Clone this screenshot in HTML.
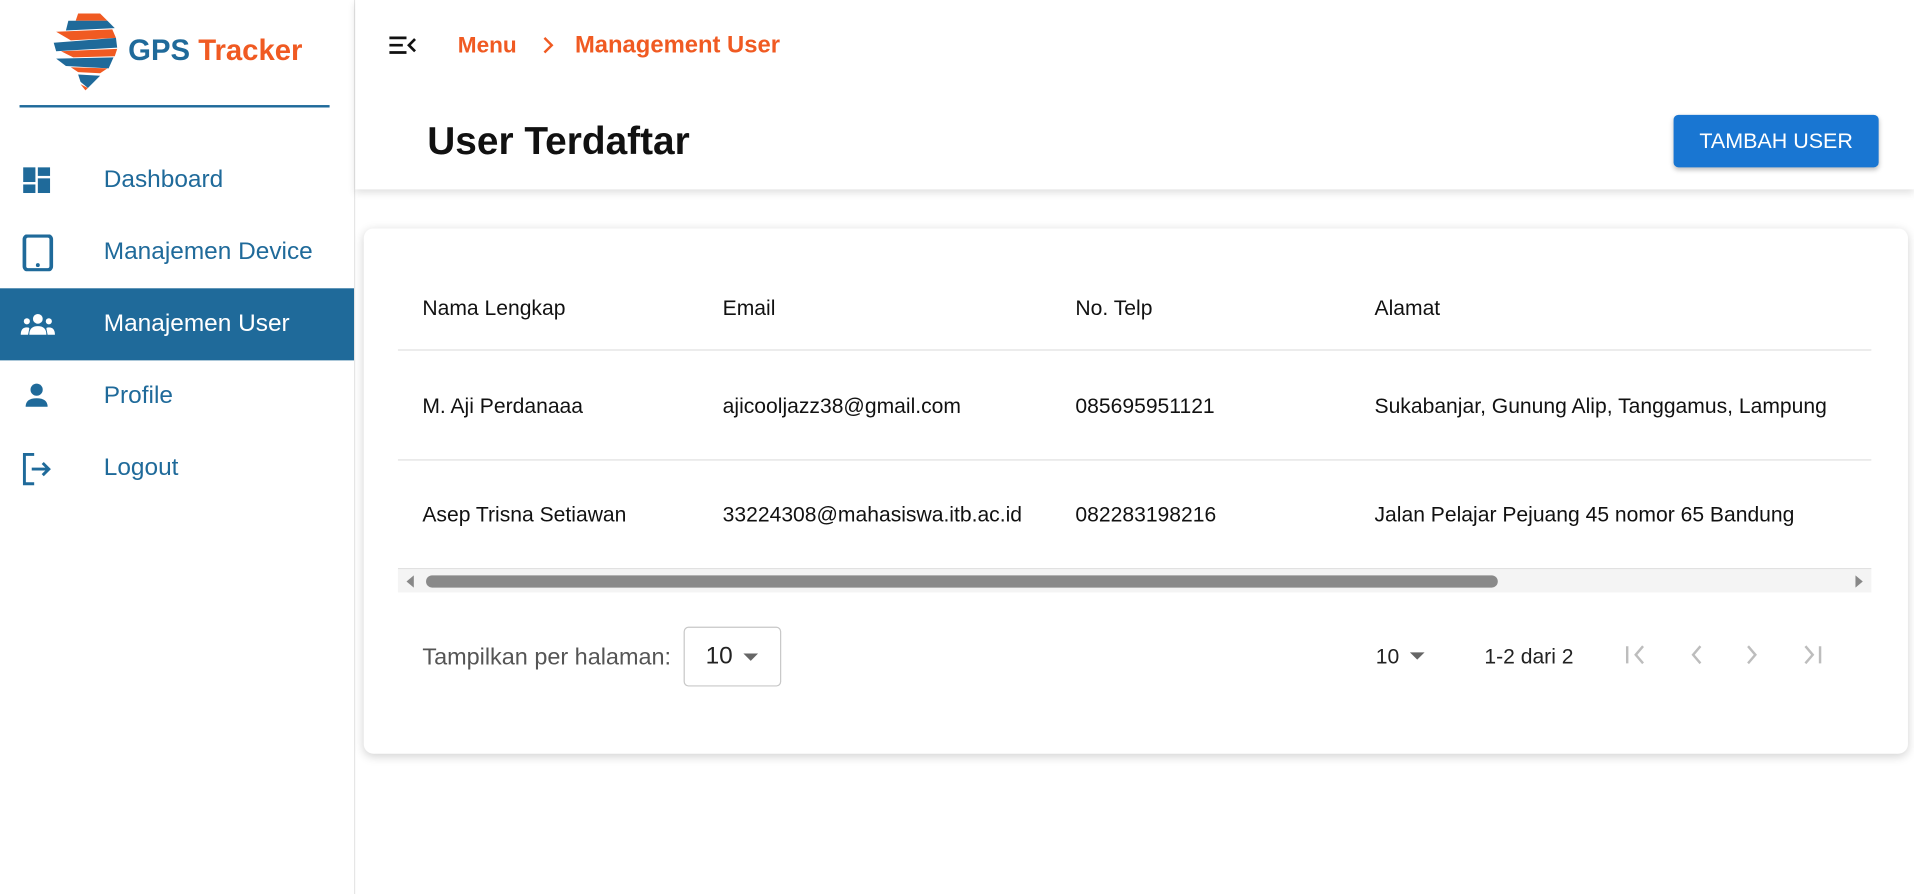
<!DOCTYPE html>
<html><head><meta charset="utf-8"><style>
html,body{margin:0;padding:0;width:1914px;height:893px;overflow:hidden;background:#fff;font-family:"Liberation Sans",Arial,sans-serif;}
#s{position:absolute;left:0;top:0;width:1568px;height:732px;transform:scale(1.2207,1.2216);transform-origin:0 0;}
.a{position:absolute;}
.nav{position:absolute;left:0;width:290px;height:59px;color:#1f6a9a;font-size:20px;}
.nav span{position:absolute;left:85px;top:18px;}
.nav svg{position:absolute;left:16px;top:17px;}
.th,.td{position:absolute;font-size:17.3px;color:#111;}
</style></head><body><div id="s">
<!-- sidebar -->
<div class="a" style="left:0;top:0;width:290px;height:732px;border-right:1px solid #e6e6e6;"></div>
<svg class="a" style="left:42px;top:9px" width="56" height="66" viewBox="0 0 56 66">
<path d="M22 2 L40 2 L46 8 L20 8Z" fill="#f05a22"/>
<path d="M14 8 L46 8 L52 14 L12 16Z" fill="#1f6a9a"/>
<path d="M4 17 L50 15 L53 22 L16 24Z" fill="#f05a22"/>
<path d="M2 26 L53 22 L54 30 L4 33Z" fill="#1f6a9a"/>
<path d="M8 33 L54 31 L52 37 L18 38Z" fill="#f05a22"/>
<path d="M4 39 L51 38 L47 47 L12 45Z" fill="#1f6a9a"/>
<path d="M16 46 L46 47 L40 51 L22 50Z" fill="#f05a22"/>
<path d="M22 52 L40 53 L30 63 L24 58Z" fill="#1f6a9a"/>
<path d="M24 60 L30 63 L28 65Z" fill="#f05a22"/>
</svg>
<div class="a" style="left:105px;top:28px;font-size:24px;font-weight:bold;color:#1f6a9a">GPS <span style="color:#f05a22">Tracker</span></div>
<div class="a" style="left:16px;top:86px;width:254px;height:2px;background:#1f6a9a"></div>

<div class="nav" style="top:118px"><svg width="26" height="24" viewBox="0 0 26 24" style="left:18px;top:18px"><rect x="1" y="1" width="10" height="12" fill="#1f6a9a"/><rect x="13" y="1" width="10" height="7" fill="#1f6a9a"/><rect x="1" y="15" width="10" height="7" fill="#1f6a9a"/><rect x="13" y="10" width="10" height="12" fill="#1f6a9a"/></svg><span>Dashboard</span></div>
<div class="nav" style="top:177px"><svg width="28" height="30" viewBox="0 0 28 30" style="top:15px"><rect x="4" y="1" width="22" height="28" rx="3" fill="none" stroke="#1f6a9a" stroke-width="3"/><circle cx="15" cy="25" r="1.6" fill="#1f6a9a"/></svg><span>Manajemen Device</span></div>
<div class="nav" style="top:236px;background:#1f6a9a;color:#fff"><svg width="32" height="24" viewBox="0 0 32 24"><circle cx="15" cy="8" r="4" fill="#fff"/><circle cx="6" cy="10" r="2.5" fill="#fff"/><circle cx="24" cy="10" r="2.5" fill="#fff"/><path d="M8 21 Q8 14 15 14 Q22 14 22 21Z M1 21 Q1 15 6 15 Q8 15 8 16 L7 21Z M29 21 Q29 15 24 15 Q22 15 22 16 L23 21Z" fill="#fff"/></svg><span>Manajemen User</span></div>
<div class="nav" style="top:295px"><svg width="28" height="26" viewBox="0 0 28 26"><circle cx="14" cy="7" r="5" fill="#1f6a9a"/><path d="M5 21 Q5 14 14 14 Q23 14 23 21Z" fill="#1f6a9a"/></svg><span>Profile</span></div>
<div class="nav" style="top:354px"><svg width="32" height="28" viewBox="0 0 32 28" style="top:16px"><path d="M12 2 H4 V26 H12" fill="none" stroke="#1f6a9a" stroke-width="2.4"/><path d="M10 14 H24 M19 9 L24 14 L19 19" fill="none" stroke="#1f6a9a" stroke-width="2.4"/></svg><span>Logout</span></div>

<!-- header -->
<div class="a" style="left:291px;top:0;width:1277px;height:155px;background:#fff;box-shadow:0 3px 6px rgba(0,0,0,.12)"></div>
<svg class="a" style="left:318px;top:28px" width="24" height="18" viewBox="0 0 24 18"><path d="M1 3H15M1 9H12M1 15H15M22 4L17 9L22 14" fill="none" stroke="#111" stroke-width="2.2"/></svg>
<div class="a" style="left:375px;top:26px;font-size:18.5px;font-weight:bold;color:#f05a22">Menu</div>
<svg class="a" style="left:443px;top:29px" width="12" height="16" viewBox="0 0 12 16"><path d="M3 2L9 8L3 14" fill="none" stroke="#f05a22" stroke-width="2"/></svg>
<div class="a" style="left:471px;top:26px;font-size:19.5px;font-weight:bold;color:#f05a22">Management User</div>
<div class="a" style="left:350px;top:97px;font-size:31.8px;font-weight:bold;color:#111">User Terdaftar</div>
<div class="a" style="left:1371px;top:94px;width:168px;height:43px;background:#1976d2;border-radius:4px;box-shadow:0 2px 4px rgba(0,0,0,.25);color:#fff;font-size:17.6px;line-height:43px;text-align:center">TAMBAH USER</div>

<!-- card -->
<div class="a" style="left:298px;top:187px;width:1265px;height:430px;background:#fff;border-radius:8px;box-shadow:0 2px 8px rgba(0,0,0,.18)"></div>
<div class="th" style="left:346px;top:242px">Nama Lengkap</div>
<div class="th" style="left:592px;top:242px">Email</div>
<div class="th" style="left:881px;top:242px">No. Telp</div>
<div class="th" style="left:1126px;top:242px">Alamat</div>
<div class="a" style="left:326px;top:286px;width:1207px;height:1px;background:#e0e0e0"></div>
<div class="td" style="left:346px;top:322px">M. Aji Perdanaaa</div>
<div class="td" style="left:592px;top:322px">ajicooljazz38@gmail.com</div>
<div class="td" style="left:881px;top:322px">085695951121</div>
<div class="td" style="left:1126px;top:322px">Sukabanjar, Gunung Alip, Tanggamus, Lampung</div>
<div class="a" style="left:326px;top:376px;width:1207px;height:1px;background:#e0e0e0"></div>
<div class="td" style="left:346px;top:411px">Asep Trisna Setiawan</div>
<div class="td" style="left:592px;top:411px">33224308@mahasiswa.itb.ac.id</div>
<div class="td" style="left:881px;top:411px">082283198216</div>
<div class="td" style="left:1126px;top:411px">Jalan Pelajar Pejuang 45 nomor 65 Bandung</div>
<div class="a" style="left:326px;top:465px;width:1207px;height:1px;background:#e0e0e0"></div>
<div class="a" style="left:326px;top:466px;width:1207px;height:19px;background:#f4f4f4"></div>
<svg class="a" style="left:331px;top:470px" width="10" height="12"><path d="M8 1L2 6L8 11Z" fill="#888"/></svg>
<svg class="a" style="left:1518px;top:470px" width="10" height="12"><path d="M2 1L8 6L2 11Z" fill="#888"/></svg>
<div class="a" style="left:349px;top:471px;width:878px;height:10px;background:#8a8a8a;border-radius:5px"></div>

<div class="a" style="left:346px;top:528px;font-size:19.2px;color:#555">Tampilkan per halaman:</div>
<div class="a" style="left:560px;top:513px;width:78px;height:47px;border:1px solid #c8c8c8;border-radius:4px"></div>
<div class="a" style="left:578px;top:526px;font-size:20px;color:#222">10</div>
<svg class="a" style="left:608px;top:534px" width="14" height="8"><path d="M1 1H13L7 7Z" fill="#666"/></svg>
<div class="a" style="left:1127px;top:527px;font-size:17.3px;color:#222">10</div>
<svg class="a" style="left:1154px;top:533px" width="14" height="8"><path d="M1 1H13L7 7Z" fill="#666"/></svg>
<div class="a" style="left:1216px;top:527px;font-size:17.3px;color:#222">1-2 dari 2</div>
<svg class="a" style="left:1330px;top:526px" width="180" height="20" viewBox="0 0 180 20"><g fill="none" stroke="#bdbdbd" stroke-width="2"><path d="M3 3V17M16 3L10 10L16 17"/><path d="M63 3L57 10L63 17"/><path d="M102 3L108 10L102 17"/><path d="M149 3L155 10L149 17M161 3V17"/></g></svg>
</div></body></html>
